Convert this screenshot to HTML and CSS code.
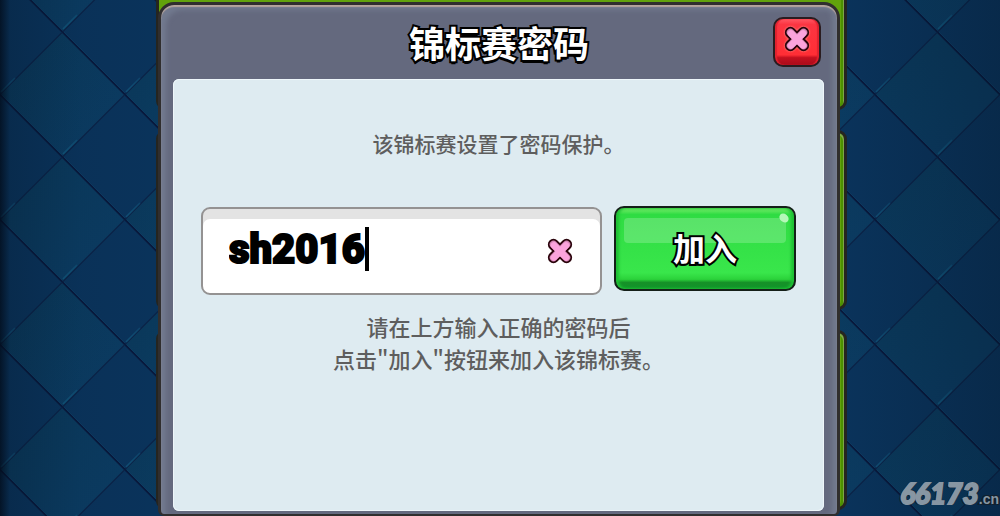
FILE: index.html
```html
<!DOCTYPE html>
<html lang="zh-CN">
<head>
    <meta charset="UTF-8">
    <meta name="viewport" content="width=device-width, initial-scale=1.0">
    <title>锦标赛密码</title>
    <link rel="stylesheet" href="styles.css">
</head>
<body>
    <svg class="backdrop" aria-hidden="true">
        <defs>
            <linearGradient id="tile-light" x1="0" y1="0" x2="1" y2="1">
                <stop offset="0" stop-color="#0a3859"/>
                <stop offset="1" stop-color="#0b3c64"/>
            </linearGradient>
            <linearGradient id="glint" x1="0" y1="1" x2="1" y2="0">
                <stop offset="0" stop-color="#14658a"/>
                <stop offset="1" stop-color="#14658a" stop-opacity="0"/>
            </linearGradient>
            <pattern id="tiles" width="125" height="125" y="32" patternUnits="userSpaceOnUse">
                <rect width="125" height="125" fill="#0a335b"/>
                <path d="M62.5 0L125 62.5L62.5 125L0 62.5Z" fill="url(#tile-light)"/>
                <path d="M0 62.5L62.5 0M62.5 125L125 62.5" stroke="#0a2348" stroke-width="1.4"/>
                <path d="M62.5 0L125 62.5M0 62.5L62.5 125" stroke="#08193d" stroke-width="2"/>
                <path d="M64 0L125 61M1.5 62.5L62.5 123.5" stroke="#0f4a72" stroke-width=".5"/>
                <path d="M63 122L77 108M1 60L15 46" stroke="url(#glint)" stroke-width="1.6"/>
            </pattern>
        </defs>
        <rect width="100%" height="100%" fill="url(#tiles)"/>
    </svg>

    <!-- shared cross icon -->
    <svg class="sprite" aria-hidden="true">
        <symbol id="cross" viewBox="0 0 30 30">
            <path d="M8 8L22 22M22 8L8 22" stroke="#2b040c" stroke-width="12" stroke-linecap="round"/>
            <path d="M8 8L22 22M22 8L8 22" stroke="#d488b6" stroke-width="8" stroke-linecap="round"/>
            <path d="M8.5 9L21.500 22M21.500 9L8.500 22" stroke="#fba3dc" stroke-width="7" stroke-linecap="round"/>
        </symbol>
    </svg>

    <main class="stage">
        <div class="cards" aria-hidden="true">
            <div class="card"></div>
            <div class="card"></div>
            <div class="card"></div>
        </div>

        <section class="dialog">
            <header class="dialog-header">
                <h1>锦标赛密码</h1>
                <button type="button" class="close-button" aria-label="关闭">
                    <svg class="cross"><use href="#cross"/></svg>
                </button>
            </header>

            <div class="dialog-body">
                <p class="notice">该锦标赛设置了密码保护。</p>
                <form class="join-form">
                    <div class="field">
                        <input type="text" class="password" value="sh2016" size="6" aria-label="密码">
                        <span class="caret"></span>
                        <button type="button" class="clear-button" aria-label="清除">
                            <svg class="cross"><use href="#cross"/></svg>
                        </button>
                    </div>
                    <button type="submit" class="join-button">加入</button>
                </form>
                <p class="hint">请在上方输入正确的密码后<br>点击"加入"按钮来加入该锦标赛。</p>
            </div>
        </section>
    </main>

    <a class="watermark" href="#">66173<span class="domain">.cn</span></a>
</body>
</html>
```
FILE: styles.css
```css
* {
    box-sizing: border-box;
}
body {
    margin: 0;
    min-height: 100vh;
    background-color: #0b325b;
    font-family: "Noto Sans CJK SC", sans-serif;
    overflow: hidden;
}
button {
    font-family: inherit;
    cursor: pointer;
}
.backdrop {
    position: absolute;
    inset: 0;
    width: 100%;
    height: 100%;
}
.sprite {
    position: absolute;
    width: 0;
    height: 0;
}
.stage {
    position: relative;
    display: grid;
    min-height: 100vh;
    padding: 0 16%;
    background: linear-gradient(to right, rgba(2, 12, 26, 0.8), rgba(4, 20, 36, 0.25) 1%, rgba(4, 20, 36, 0.05) 8%, transparent 16%, transparent 84%, rgba(4, 20, 36, 0.3));
}
.cards,
.dialog {
    grid-area: 1 / 1;
}

/* list cards behind the dialog */
.cards {
    display: flex;
    flex-direction: column;
    gap: 20px;
    margin: -70px -7px 6px -4px;
}
.card {
    flex: 1;
    border: 3px solid #26251f;
    border-radius: 9px;
    background-color: #62a30c;
    box-shadow: inset -1px 2px 0 #7da64a, inset -3px 0 0 #4c9000;
}

.dialog {
    display: flex;
    flex-direction: column;
    margin: 2px 0 0 -2px;
    padding: 0 13px 3px 12px;
    border: 3px solid #302e2e;
    border-bottom-width: 2px;
    border-radius: 16px 16px 6px 6px;
    background-color: #64697e;
    box-shadow: inset 0 2px 1px #b5a49c, inset 8px 8px 5px -3px #727a8f, inset -8px 0 5px -3px #727a8f;
}
.dialog-header {
    display: grid;
    grid-template-columns: 48px 1fr 48px;
    align-items: center;
    height: 74px;
    padding-right: 3px;
}
h1 {
    grid-column: 2;
    margin: 0;
    padding-left: 4px;
    color: #fff;
    font-size: 36px;
    font-weight: 700;
    line-height: 48px;
    text-align: center;
    -webkit-text-stroke: 4px #000;
    paint-order: stroke fill;
    text-shadow: 0 3px 0 #000;
}
.close-button {
    display: grid;
    place-items: center;
    height: 50px;
    padding: 0 0 6px;
    border: 2px solid #2a1c20;
    border-radius: 10px;
    background: linear-gradient(#ff5864, #fb3542 12%, #ff2e35 78%, #c4101f 84%, #a90b1a);
    box-shadow: inset 2px 0 1px #e0222f, inset -2px 0 1px #e0222f;
}
.cross {
    display: block;
    width: 28px;
    height: 28px;
}
.close-button .cross {
    filter: drop-shadow(0 0 1px #ff9a90);
}

.dialog-body {
    flex: 1;
    padding: 48px 28px 0;
    border-radius: 6px;
    background-color: #deebf1;
    box-shadow: inset 0 0 0 1px #eef6fa;
    color: #5e5e5e;
    text-align: center;
}
.notice,
.hint {
    margin: 0;
    font-weight: 500;
    line-height: 32px;
}
.notice {
    font-size: 21px;
}
.hint {
    padding-top: 15px;
    font-size: 22px;
}
.join-form {
    display: grid;
    grid-template-columns: 11fr 5fr;
    align-items: start;
    gap: 12px;
    padding-top: 47px;
}
.field {
    display: flex;
    align-items: center;
    height: 88px;
    margin-top: 1px;
    padding: 0 26px 4px;
    border: 2px solid #949292;
    border-radius: 9px;
    background-color: #fff;
    box-shadow: inset 0 10px 0 #e3e3e3;
}
.password {
    field-sizing: content;
    min-width: 0;
    padding: 0;
    border: 0;
    outline: 0;
    background: none;
    color: #000;
    font-family: Roboto, "Noto Sans CJK SC", sans-serif;
    font-size: 40px;
    font-weight: 900;
    -webkit-text-stroke: 2px #000;
    caret-color: transparent;
}
.caret {
    width: 4px;
    height: 44px;
    background-color: #000;
}
.clear-button {
    margin-left: auto;
    padding: 4px 0 0;
    border: 0;
    background: none;
}
.join-button {
    position: relative;
    isolation: isolate;
    height: 85px;
    padding: 0 0 4px;
    border: 2px solid #141f18;
    border-radius: 10px;
    background: linear-gradient(#7bed6c, #2fdc43 8%, #39e64b 80%, #2bd23a 88%, #169128 92%, #10952a);
    box-shadow: inset 3px 0 3px #1fc035, inset -3px 0 3px #1fc035;
    color: #fff;
    font-size: 32px;
    font-weight: 700;
    -webkit-text-stroke: 4px #000;
    paint-order: stroke fill;
    text-shadow: 0 2px 0 #000;
}
/* glossy strip and the spot in the corner */
.join-button::before {
    content: "";
    position: absolute;
    inset: 10px 8px 46px;
    z-index: -1;
    border-radius: 4px;
    background-color: rgba(255, 255, 255, 0.2);
}
.join-button::after {
    content: "";
    position: absolute;
    top: 6px;
    right: 5px;
    width: 10px;
    height: 8px;
    border-radius: 50%;
    background-color: #b5f8b8;
    transform: rotate(40deg);
}

.watermark {
    position: absolute;
    right: 1px;
    bottom: 0;
    color: #8796a3;
    font-family: Lato, sans-serif;
    font-size: 28px;
    font-style: italic;
    font-weight: 900;
    line-height: 34px;
    text-decoration: none;
    -webkit-text-stroke: 2px #8796a3;
    text-shadow: 1px 1px 0 #12202e, -1px -1px 0 #12202e, 1px -1px 0 #12202e, -2px 1px 0 #12202e;
}
.domain {
    font-family: "Liberation Sans", sans-serif;
    font-size: 14px;
    font-style: normal;
    -webkit-text-stroke: 0;
}
```
